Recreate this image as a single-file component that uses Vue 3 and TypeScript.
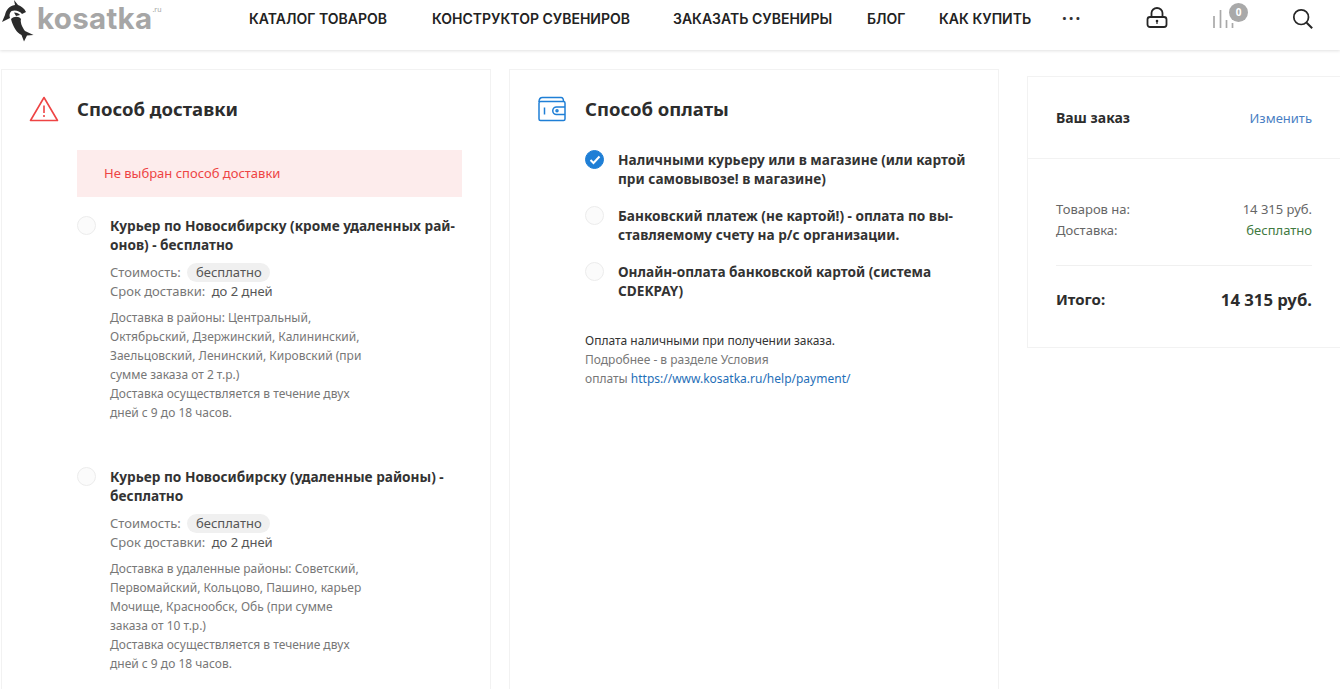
<template>
  <div class="page">
    <header class="topbar">
      <a class="logo">
        <svg class="orca" width="36" height="42" viewBox="0 0 36 42">
          <path d="M14 0 L18 5 C21 6 24 8 26 12 L22 14 C20 11 15 9.500 11.500 11 C9.500 13 9 15 10 18 L2 22 L5 15 C6 10 9 6 15 5 Z" fill="#2b2b2b" />
          <path d="M11 19 C14 16 19 16 21 19 C20 22 22 27 25 31 L33.500 35 L27 35.500 L24 41.500 L21.500 35 C17 33 13 27 11 19 Z" fill="#2b2b2b" />
          <path d="M14 12.500 C17 12.500 19 13.500 20 15 L16 16 Z" fill="#2b2b2b" />
        </svg>
        <span class="logo-text">kosatka</span>
        <span class="logo-ru">.ru</span>
      </a>
      <nav class="nav">
        <a v-for="item in navItems" :key="item.label" class="nav-link" :style="{ width: item.width + 'px' }">{{ item.label }}</a>
        <span class="nav-more">···</span>
      </nav>
      <div class="tools">
        <svg width="22" height="22" viewBox="0 0 22 22" fill="none" stroke="#262626" stroke-width="1.800">
          <rect x="1.500" y="10" width="19" height="10" rx="2.500" />
          <path d="M5.500 10 V6 a5.500 5 0 0 1 11 0 V10" />
          <circle cx="11" cy="14" r="1.300" fill="#262626" stroke="none" />
          <path d="M11 14.500 V17" stroke-width="1.200" />
        </svg>
        <div class="compare">
          <svg width="22" height="20" viewBox="0 0 22 20" stroke="#a9a9a9" stroke-width="1.700">
            <path d="M2 6 V18 M8.500 0 V18 M14.500 10 V18 M20.500 13 V18" />
          </svg>
          <span class="compare-badge">0</span>
        </div>
        <svg class="tool-search" width="22" height="22" viewBox="0 0 24 24" fill="none" stroke="#262626" stroke-width="1.900">
          <circle cx="10" cy="10" r="8" />
          <path d="M16 16 L22 22" stroke-width="2.200" />
        </svg>
      </div>
    </header>

    <main class="content">
      <section class="panel panel-delivery">
        <div class="panel-head">
          <svg width="30" height="26" viewBox="0 0 30 26" fill="none" stroke="#ee4444" stroke-width="1.600" stroke-linejoin="round">
            <path d="M15 1.500 L28.500 24.500 H1.500 Z" />
            <path d="M15 9.500 V17" />
            <path d="M15 19 V21" />
          </svg>
          <h2>Способ доставки</h2>
        </div>
        <div class="panel-body">
          <div class="alert">Не выбран способ доставки</div>
          <div v-for="opt in deliveryOptions" :key="opt.title[0]" class="delivery">
            <span class="radio"></span>
            <div class="delivery-info">
              <div class="option-title">{{ opt.title[0] }}<br>{{ opt.title[1] }}</div>
              <div class="meta meta-cost">Стоимость: <span class="pill">бесплатно</span></div>
              <div class="meta">Срок доставки: <span class="meta-val">до 2 дней</span></div>
              <p class="note">
                <template v-for="line in opt.note" :key="line">{{ line }}<br></template>
              </p>
            </div>
          </div>
        </div>
      </section>

      <section class="panel panel-payment">
        <div class="panel-head">
          <svg width="28" height="26" viewBox="0 0 28 26" fill="none" stroke="#1f7fd6" stroke-width="1.500" stroke-linejoin="round">
            <path d="M1 6 C1 3 2.500 1.500 4.500 1.500 H23 C25 1.500 25.500 3 25.500 5.500" />
            <rect x="1" y="5.500" width="26" height="19" rx="1.500" />
            <path d="M6.500 11.500 V18.500" />
            <path d="M27 11 H18.500 a3.500 3.500 0 0 0 0 7.500 H27" />
            <circle cx="19" cy="14.800" r="1" />
          </svg>
          <h2>Способ оплаты</h2>
        </div>
        <div class="panel-body">
          <div v-for="(opt, i) in paymentOptions" :key="opt[0]" class="payment">
            <span v-if="i === 0" class="radio radio-on">
              <svg width="12" height="10" viewBox="0 0 12 10" fill="none" stroke="#fff" stroke-width="2">
                <path d="M1.500 5 L4.500 8 L10.500 1.500" />
              </svg>
            </span>
            <span v-else class="radio"></span>
            <div class="option-title">{{ opt[0] }}<br>{{ opt[1] }}</div>
          </div>
          <p class="pay-note">
            <span class="dark">Оплата наличными при получении заказа.</span><br>
            Подробнее - в разделе Условия<br>
            оплаты <a class="pay-link">https://www.kosatka.ru/help/payment/</a>
          </p>
        </div>
      </section>

      <aside class="order">
        <div class="order-head">
          <strong>Ваш заказ</strong>
          <a class="order-edit">Изменить</a>
        </div>
        <div class="order-body">
          <div class="order-lines">
            <div class="order-row"><span>Товаров на:</span><span>14 315 руб.</span></div>
            <div class="order-row"><span>Доставка:</span><span class="free">бесплатно</span></div>
          </div>
          <div class="order-total">
            <strong>Итого:</strong>
            <strong class="total-sum">14 315 руб.</strong>
          </div>
        </div>
      </aside>
    </main>
  </div>
</template>

<script setup lang="ts">
interface NavItem {
  label: string
  width: number
}

interface DeliveryOption {
  title: [string, string]
  note: string[]
}

const navItems: NavItem[] = [
  { label: 'КАТАЛОГ ТОВАРОВ', width: 183 },
  { label: 'КОНСТРУКТОР СУВЕНИРОВ', width: 241 },
  { label: 'ЗАКАЗАТЬ СУВЕНИРЫ', width: 194 },
  { label: 'БЛОГ', width: 72 },
  { label: 'КАК КУПИТЬ', width: 123 }
]

const deliveryOptions: DeliveryOption[] = [
  {
    title: ['Курьер по Новосибирску (кроме удаленных рай-', 'онов) - бесплатно'],
    note: [
      'Доставка в районы: Центральный,',
      'Октябрьский, Дзержинский, Калининский,',
      'Заельцовский, Ленинский, Кировский (при',
      'сумме заказа от 2 т.р.)',
      'Доставка осуществляется в течение двух',
      'дней с 9 до 18 часов.'
    ]
  },
  {
    title: ['Курьер по Новосибирску (удаленные районы) -', 'бесплатно'],
    note: [
      'Доставка в удаленные районы: Советский,',
      'Первомайский, Кольцово, Пашино, карьер',
      'Мочище, Краснообск, Обь (при сумме',
      'заказа от 10 т.р.)',
      'Доставка осуществляется в течение двух',
      'дней с 9 до 18 часов.'
    ]
  }
]

const paymentOptions: [string, string][] = [
  ['Наличными курьеру или в магазине (или картой', 'при самовывозе! в магазине)'],
  ['Банковский платеж (не картой!) - оплата по вы-', 'ставляемому счету на р/с организации.'],
  ['Онлайн-оплата банковской картой (система', 'CDEKPAY)']
]
</script>

<style>
html,
body {
  margin: 0;
  height: 100%;
  overflow: hidden;
  background: #fff;
}
</style>

<style scoped>
.page {
  height: 689px;
  overflow: hidden;
  font-family: "Noto Sans", "Open Sans", sans-serif;
  color: #2d2d2d;
}

.topbar {
  height: 50px;
  display: flex;
  align-items: flex-start;
  box-shadow: 0 1px 3px rgba(0, 0, 0, 0.12);
  position: relative;
}

.logo {
  width: 249px;
  display: flex;
  align-items: flex-start;
  flex: none;
}

.orca {
  flex: none;
}

.logo-text {
  font-family: "Inter", sans-serif;
  font-weight: 700;
  font-size: 29.500px;
  line-height: 36px;
  padding-left: 1px;
  color: #a6a6a6;
  letter-spacing: 0.3px;
}

.logo-ru {
  font-size: 7px;
  color: #a6a6a6;
  margin-top: 5px;
}

.nav {
  display: flex;
  align-items: center;
  height: 37px;
  flex: none;
}

.nav-link {
  flex: none;
  font-family: "Inter", sans-serif;
  font-size: 14px;
  font-weight: 600;
  color: #222;
  white-space: nowrap;
}

.nav-more {
  font-size: 17px;
  font-weight: 700;
  letter-spacing: 2px;
  color: #333;
}

.tools {
  position: absolute;
  top: 7px;
  left: 1146px;
  display: flex;
  align-items: flex-start;
}

.compare {
  position: relative;
  margin-left: 44px;
  margin-top: 3px;
}

.compare-badge {
  position: absolute;
  left: 17px;
  top: -7px;
  width: 19px;
  height: 19px;
  border-radius: 50%;
  background: #a9a9a9;
  color: #fff;
  font-size: 10px;
  font-weight: 700;
  line-height: 19px;
  text-align: center;
}

.tool-search {
  margin-left: 58px;
  margin-top: 1px;
}

.content {
  display: flex;
  align-items: flex-start;
  padding: 19px 0 0 1px;
}

.panel {
  width: 490px;
  height: 640px;
  box-sizing: border-box;
  border: 1px solid #f2f2f2;
  flex: none;
}

.panel-payment {
  margin-left: 18px;
}

.panel-head {
  height: 80px;
  display: flex;
  align-items: center;
  padding: 0 0 2px 27px;
  box-sizing: border-box;
}

.panel-head svg {
  flex: none;
  width: 30px;
}

.panel-head h2 {
  margin: 0 0 0 18px;
  font-size: 18.500px;
  font-weight: 700;
  line-height: 24px;
}

.panel-body {
  padding-left: 75px;
}

.alert {
  width: 385px;
  height: 47px;
  box-sizing: border-box;
  padding-left: 27px;
  background: #fdecec;
  color: #ee4444;
  font-size: 13px;
  line-height: 47px;
}

.delivery {
  display: flex;
  margin-top: 19px;
}

.delivery + .delivery {
  margin-top: 45px;
}

.radio {
  flex: none;
  width: 19px;
  height: 19px;
  box-sizing: border-box;
  border: 1px solid #ececec;
  border-radius: 50%;
  background: #fbfbfb;
  margin-right: 14px;
  display: flex;
  align-items: center;
  justify-content: center;
}

.radio-on {
  background: #1f7fd6;
  border-color: #1f7fd6;
}

.option-title {
  font-size: 13.650px;
  font-weight: 700;
  line-height: 19px;
  white-space: nowrap;
  color: #333;
}

.meta {
  font-size: 13px;
  line-height: 19px;
  color: #777;
}

.meta-cost {
  margin-top: 9px;
}

.pill {
  display: inline-block;
  padding: 0 8px 0 9px;
  margin-left: 3px;
  border-radius: 10px;
  background: #f0f0f0;
  color: #555;
  line-height: 19px;
}

.meta-val {
  color: #555;
  margin-left: 3px;
}

.note {
  margin: 7px 0 0;
  font-size: 12px;
  line-height: 19px;
  color: #777;
  white-space: nowrap;
}

.payment {
  display: flex;
  margin-bottom: 18px;
}

.pay-note {
  margin: 31px 0 0;
  font-size: 12px;
  line-height: 19px;
  color: #777;
}

.dark {
  color: #333;
}

.pay-link {
  color: #1f6fb8;
}

.order {
  width: 313px;
  height: 272px;
  box-sizing: border-box;
  margin: 7px 0 0 28px;
  flex: none;
  border: 1px solid #f2f2f2;
  border-right: none;
}

.order-head {
  height: 82px;
  box-sizing: border-box;
  padding: 0 28px;
  display: flex;
  align-items: center;
  justify-content: space-between;
  border-bottom: 1px solid #f2f2f2;
}

.order-head strong {
  font-size: 14px;
}

.order-edit {
  font-size: 13px;
  color: #4a7fc4;
}

.order-body {
  padding: 0 28px;
}

.order-lines {
  padding: 40px 0 24px;
  border-bottom: 1px solid #f0f0f0;
}

.order-row {
  display: flex;
  justify-content: space-between;
  font-size: 13px;
  line-height: 21px;
  color: #666;
}

.free {
  color: #3f7a3f;
}

.order-total {
  display: flex;
  align-items: center;
  justify-content: space-between;
  height: 66px;
}

.order-total strong {
  font-size: 15px;
}

.order-total .total-sum {
  font-size: 16.700px;
}
</style>
